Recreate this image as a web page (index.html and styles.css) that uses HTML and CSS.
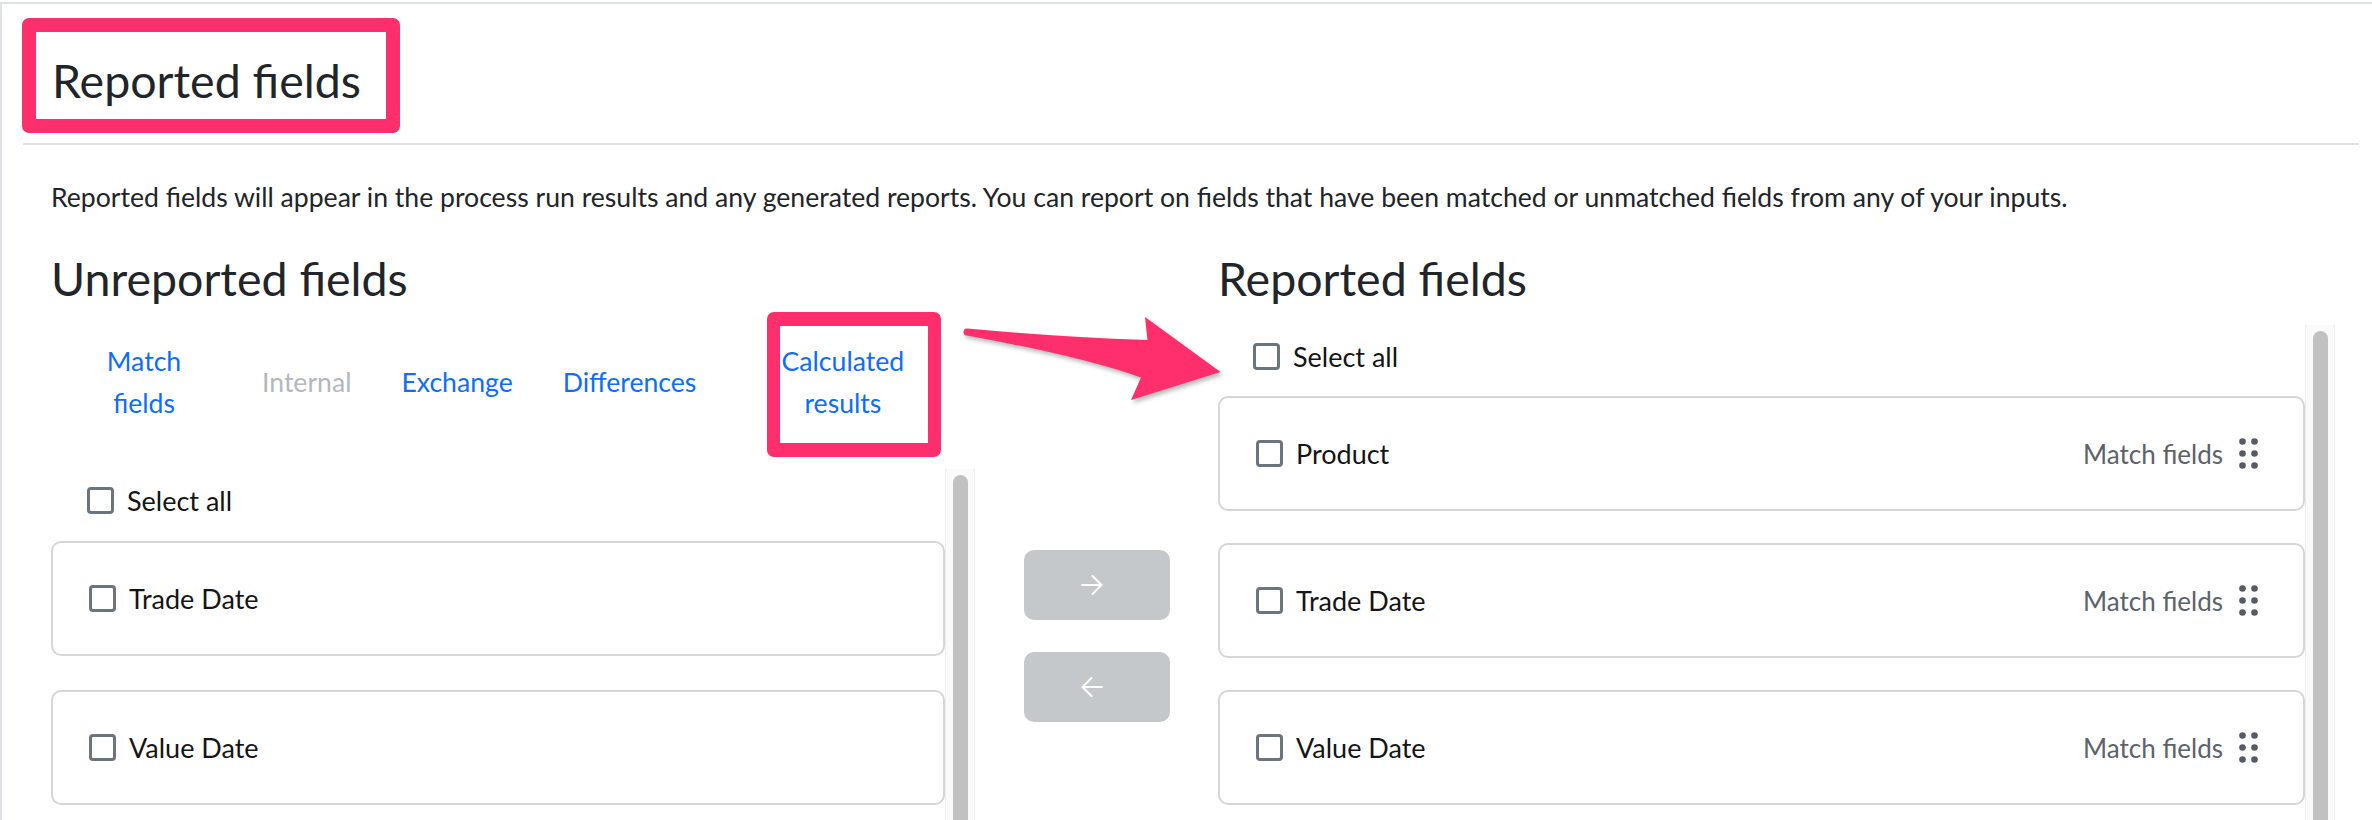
FILE: index.html
```html
<!DOCTYPE html>
<html lang="en">
<head>
<meta charset="utf-8">
<title>Reported fields</title>
<link rel="stylesheet" href="styles.css">
</head>
<body>
<div class="page">
  <header class="page-header">
    <h1 class="title">Reported fields</h1>
  </header>
  <div class="page-body">
    <p class="intro">Reported fields will appear in the process run results and any generated reports. You can report on fields that have been matched or unmatched fields from any of your inputs.</p>
    <div class="columns">
      <section class="col col-left">
        <h2 class="col-title">Unreported fields</h2>
        <nav class="tabs">
          <a class="tab tab-match">Match<br>fields</a>
          <a class="tab tab-disabled">Internal</a>
          <a class="tab">Exchange</a>
          <a class="tab">Differences</a>
          <a class="tab tab-calc">Calculated<br>results</a>
        </nav>
        <div class="list-wrap">
          <div class="list list-left">
            <label class="select-all"><span class="cb"></span>Select all</label>
            <div class="field-card"><span class="cb"></span><span class="field-name">Trade Date</span></div>
            <div class="field-card"><span class="cb"></span><span class="field-name">Value Date</span></div>
          </div>
          <div class="scrollbar"><div class="thumb"></div></div>
        </div>
      </section>
      <div class="col-mid">
        <button class="move-btn" type="button" aria-label="Add">
          <svg viewBox="0 0 22 22" width="22" height="22"><path d="M1 11H20.5M11.5 2L20.5 11L11.5 20" fill="none" stroke="#fff" stroke-width="2" stroke-linecap="round" stroke-linejoin="round"/></svg>
        </button>
        <button class="move-btn" type="button" aria-label="Remove">
          <svg viewBox="0 0 22 22" width="22" height="22"><path d="M21 11H1.5M10.5 2L1.5 11L10.5 20" fill="none" stroke="#fff" stroke-width="2" stroke-linecap="round" stroke-linejoin="round"/></svg>
        </button>
      </div>
      <section class="col col-right">
        <h2 class="col-title">Reported fields</h2>
        <div class="list-wrap list-wrap-right">
          <div class="list">
            <label class="select-all select-all-right"><span class="cb"></span>Select all</label>
            <div class="field-card"><span class="cb"></span><span class="field-name">Product</span><span class="source">Match fields</span><svg class="grip" viewBox="0 0 19 31" width="19" height="31"><circle cx="3.5" cy="3.5" r="3.3"/><circle cx="15.5" cy="3.5" r="3.3"/><circle cx="3.5" cy="15.5" r="3.3"/><circle cx="15.5" cy="15.5" r="3.3"/><circle cx="3.5" cy="27.5" r="3.3"/><circle cx="15.5" cy="27.5" r="3.3"/></svg></div>
            <div class="field-card"><span class="cb"></span><span class="field-name">Trade Date</span><span class="source">Match fields</span><svg class="grip" viewBox="0 0 19 31" width="19" height="31"><circle cx="3.5" cy="3.5" r="3.3"/><circle cx="15.5" cy="3.5" r="3.3"/><circle cx="3.5" cy="15.5" r="3.3"/><circle cx="15.5" cy="15.5" r="3.3"/><circle cx="3.5" cy="27.5" r="3.3"/><circle cx="15.5" cy="27.5" r="3.3"/></svg></div>
            <div class="field-card"><span class="cb"></span><span class="field-name">Value Date</span><span class="source">Match fields</span><svg class="grip" viewBox="0 0 19 31" width="19" height="31"><circle cx="3.5" cy="3.5" r="3.3"/><circle cx="15.5" cy="3.5" r="3.3"/><circle cx="3.5" cy="15.5" r="3.3"/><circle cx="15.5" cy="15.5" r="3.3"/><circle cx="3.5" cy="27.5" r="3.3"/><circle cx="15.5" cy="27.5" r="3.3"/></svg></div>
          </div>
          <div class="scrollbar"><div class="thumb"></div></div>
        </div>
      </section>
    </div>
  </div>
</div>
<div class="annot-box annot-title"></div>
<div class="annot-box annot-tab"></div>
<svg class="annot-arrow" viewBox="950 305 285 110" width="285" height="110">
  <path d="M967 328.5 Q1060 337 1147.5 340 L1145 317 L1220.5 372 L1131 400 L1141 377.5 Q1080 356 967 335.5 A3.5 3.5 0 0 1 967 328.5 Z" fill="#ff2e6c"/>
</svg>
</body>
</html>
```

FILE: styles.css
```css
* {
  box-sizing: border-box;
}

html,
body {
  margin: 0;
  padding: 0;
}

body {
  position: relative;
  width: 2372px;
  height: 820px;
  overflow: hidden;
  background: #fff;
  font-family: Lato, "Noto Sans", sans-serif;
  color: #212529;
}

.page {
  margin-top: 2px;
  height: 818px;
  border-top: 2px solid #dee2e6;
  border-left: 2px solid #dee2e6;
  padding: 0 13px 0 21px;
}

.page-header {
  padding: 49px 0 35px 29px;
  border-bottom: 2px solid #dee2e6;
}

.title,
.col-title {
  margin: 0;
  font-size: 46.5px;
  font-weight: 400;
  line-height: 55px;
  color: #212529;
}

.page-body {
  padding-left: 28px;
}

.intro {
  margin: 33px 0 0;
  font-size: 26.6px;
  line-height: 39px;
}

.columns {
  display: flex;
  margin-top: 34px;
}

.col-left {
  width: 924px;
  flex-shrink: 0;
}

.col-mid {
  width: 243px;
  flex-shrink: 0;
  display: flex;
  flex-direction: column;
  align-items: center;
  gap: 32px;
  padding-top: 299px;
}

.col-right {
  width: 1117px;
  flex-shrink: 0;
}

/* tabs */
.tabs {
  display: flex;
  align-items: center;
  margin-top: 27px;
}

.tab {
  flex-shrink: 0;
  padding: 7px 25px;
  font-size: 26.6px;
  line-height: 42px;
  color: #0d6efd;
  text-align: center;
  text-decoration: none;
}

.tab-match {
  width: 186px;
}

.tab-calc {
  width: 243px;
}

.tab-disabled {
  color: #b4b8bc;
}

/* lists */
.list-wrap {
  display: flex;
  height: 600px;
  margin-top: 38px;
}

.list-wrap-right {
  margin-top: 19px;
}

.list {
  flex: 1;
}

.scrollbar {
  width: 30px;
  flex-shrink: 0;
  background: #fafafa;
  border-left: 1px solid #ececec;
  border-right: 1px solid #ececec;
  padding: 6px 6px 0 7px;
}

.thumb {
  height: 800px;
  border-radius: 8px;
  background: #c1c1c1;
}

.select-all {
  display: flex;
  align-items: center;
  height: 62px;
  margin-bottom: 10px;
  padding-left: 36px;
  font-size: 27px;
  color: #151515;
}

.select-all-right {
  padding-left: 35px;
  margin-bottom: 9px;
}

.cb {
  width: 27px;
  height: 27px;
  flex-shrink: 0;
  border: 3px solid #6c757d;
  border-radius: 4px;
  background: #fff;
  margin-right: 13px;
}

.field-card {
  display: flex;
  align-items: center;
  height: 115px;
  margin-bottom: 32px;
  padding: 0 45px 0 36px;
  border: 2px solid #d6d6d6;
  border-radius: 10px;
  background: #fff;
}

.list-left .field-card {
  margin-bottom: 34px;
}

.field-name {
  font-size: 27px;
  color: #151515;
}

.source {
  margin-left: auto;
  font-size: 26px;
  color: #5c636a;
}

.grip {
  margin-left: 16px;
  fill: #555b61;
}

/* move buttons */
.move-btn {
  display: flex;
  align-items: center;
  justify-content: center;
  width: 146px;
  height: 70px;
  padding: 0 10px 0 0;
  border: none;
  border-radius: 10px;
  background: #c5c8cb;
}

/* annotations drawn over the screenshot */
.annot-box {
  position: absolute;
  border: 14px solid #ff2e6c;
  border-radius: 7px;
}

.annot-title {
  left: 22px;
  top: 18px;
  width: 378px;
  height: 115px;
}

.annot-tab {
  left: 767px;
  top: 312px;
  width: 174px;
  height: 145px;
  border-width: 14px 13px;
}

.annot-arrow {
  position: absolute;
  left: 950px;
  top: 305px;
  overflow: visible;
  filter: drop-shadow(2px 3px 2px rgba(0, 0, 0, 0.28));
}
```
